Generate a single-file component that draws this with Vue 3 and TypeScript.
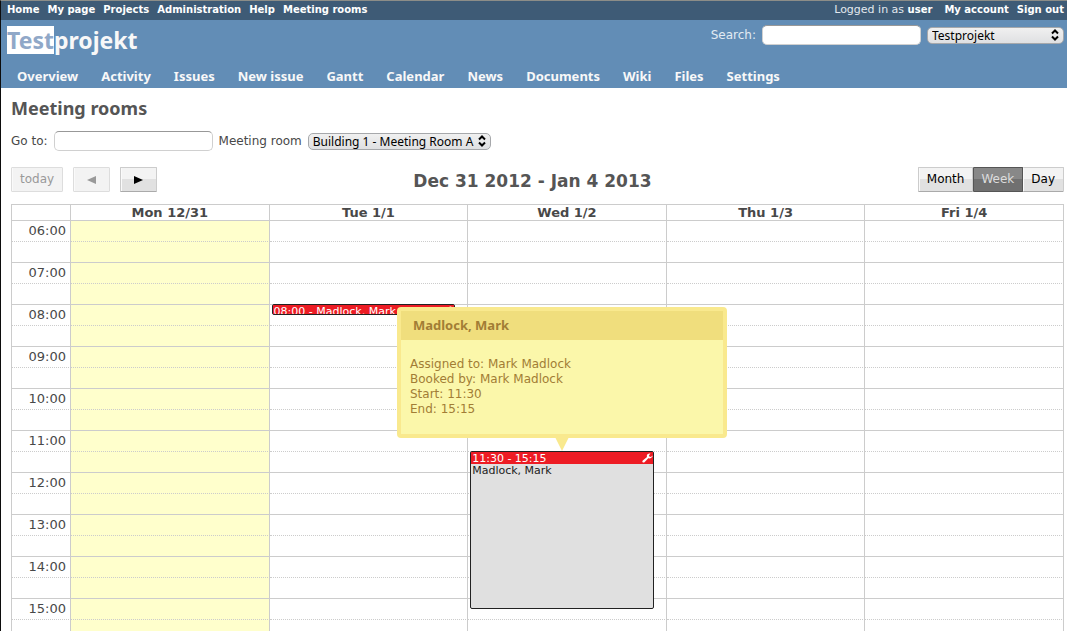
<script setup lang="ts">
import { ref } from 'vue'

interface Booking {
  day: number
  slot: string
  rows: 'short' | 'long'
  heading: string
  title: string
}

interface Slot {
  label: string
  time: string
  half: boolean
}

const accountLinks = ['My account', 'Sign out']
const topLinks = ['Home', 'My page', 'Projects', 'Administration', 'Help', 'Meeting rooms']
const projectTabs = [
  'Overview', 'Activity', 'Issues', 'New issue', 'Gantt', 'Calendar',
  'News', 'Documents', 'Wiki', 'Files', 'Settings',
]
const days = ['Mon 12/31', 'Tue 1/1', 'Wed 1/2', 'Thu 1/3', 'Fri 1/4']
const views = ['Month', 'Week', 'Day']

const query = ref('')
const goTo = ref('')
const project = ref('Testprojekt')
const room = ref('Building 1 - Meeting Room A')
const view = ref('Week')
const today = 0

const slots: Slot[] = []
for (let hour = 6; hour <= 15; hour++) {
  const hh = String(hour).padStart(2, '0')
  slots.push({ label: `${hh}:00`, time: `${hh}:00`, half: false })
  slots.push({ label: '', time: `${hh}:30`, half: true })
}

const bookings: Booking[] = [
  { day: 1, slot: '08:00', rows: 'short', heading: '08:00 - Madlock, Mark', title: '' },
  { day: 2, slot: '11:30', rows: 'long', heading: '11:30 - 15:15', title: 'Madlock, Mark' },
]

const details = [
  'Assigned to: Mark Madlock',
  'Booked by: Mark Madlock',
  'Start: 11:30',
  'End: 15:15',
]

function bookingsAt(day: number, time: string): Booking[] {
  return bookings.filter((b) => b.day === day && b.slot === time)
}
</script>

<template>
  <div class="page">
    <div class="top-menu">
      <nav class="top-links" aria-label="Global">
        <a v-for="link in topLinks" :key="link" href="#">{{ link }}</a>
      </nav>
      <div class="account">
        <span class="logged">Logged in as <a href="#">user</a></span>
        <a v-for="link in accountLinks" :key="link" href="#">{{ link }}</a>
      </div>
    </div>

    <header class="header">
      <div class="header-row">
        <h1><span class="selected">Test</span>projekt</h1>
        <form class="quick-search" @submit.prevent>
          <label for="q">Search:</label>
          <input id="q" v-model="query" type="text" />
          <span class="select project-select">
            <select v-model="project" aria-label="Project">
              <option>Testprojekt</option>
            </select>
            <svg viewBox="0 0 8 12" aria-hidden="true"><path d="M1 4.5 4 1.5 7 4.5M1 7.5l3 3 3-3" /></svg>
          </span>
        </form>
      </div>
      <nav class="tabs" aria-label="Project">
        <a v-for="tab in projectTabs" :key="tab" href="#">{{ tab }}</a>
      </nav>
    </header>

    <main class="content">
      <h2>Meeting rooms</h2>
      <form class="filters" @submit.prevent>
        <label for="goto">Go to:</label>
        <input id="goto" v-model="goTo" type="text" />
        <label for="room">Meeting room</label>
        <span class="select room-select">
          <select id="room" v-model="room">
            <option>Building 1 - Meeting Room A</option>
          </select>
          <svg viewBox="0 0 8 12" aria-hidden="true"><path d="M1 4.5 4 1.5 7 4.5M1 7.5l3 3 3-3" /></svg>
        </span>
      </form>

      <div class="toolbar">
        <div class="pager">
          <button type="button" disabled>today</button>
          <button type="button" class="arrow" disabled aria-label="Previous week">
            <svg viewBox="0 0 9 8" aria-hidden="true"><path d="M9 0v8L0 4z" /></svg>
          </button>
          <button type="button" class="arrow" aria-label="Next week">
            <svg viewBox="0 0 9 8" aria-hidden="true"><path d="M0 0v8l9-4z" /></svg>
          </button>
        </div>
        <h3>Dec 31 2012 - Jan 4 2013</h3>
        <div class="views">
          <button
            v-for="name in views"
            :key="name"
            type="button"
            :class="{ active: name === view }"
            :aria-pressed="name === view"
            @click="view = name"
          >{{ name }}</button>
        </div>
      </div>

      <table class="agenda">
        <thead>
          <tr>
            <th class="axis"></th>
            <th v-for="day in days" :key="day" scope="col">{{ day }}</th>
          </tr>
        </thead>
        <tbody>
          <tr v-for="slot in slots" :key="slot.time" :class="{ half: slot.half }">
            <th class="axis" scope="row">{{ slot.label }}</th>
            <td v-for="(day, index) in days" :key="day" :class="{ today: index === today }">
              <div
                v-for="booking in bookingsAt(index, slot.time)"
                :key="booking.heading"
                class="event"
                :class="booking.rows"
              >
                <div class="event-body">
                  <div class="event-head">
                    <span>{{ booking.heading }}</span>
                    <svg viewBox="0 0 11 10" aria-hidden="true">
                      <path d="M10.6 2.6 8.9 4 7.3 3.6 7 2.200 8.500.6C7 .1 5.300.8 4.900 2.300c-.2.600-.1 1.100.1 1.600L.8 7.400c-.6.500-.6 1.300-.1 1.800.5.500 1.300.5 1.800 0L6.300 5.300c1.700.6 4.400-.5 4.300-2.700z" />
                    </svg>
                  </div>
                  <div v-if="booking.title" class="event-title">{{ booking.title }}</div>
                </div>
                <div v-if="booking.rows === 'long'" class="tip" role="tooltip">
                  <div class="tip-title">Madlock, Mark</div>
                  <div class="tip-text">
                    <div v-for="line in details" :key="line">{{ line }}</div>
                  </div>
                  <svg class="tip-arrow" viewBox="0 0 14 14" aria-hidden="true"><path d="M0 0h14L7 14z" /></svg>
                </div>
              </div>
            </td>
          </tr>
        </tbody>
      </table>
    </main>
  </div>
</template>

<style>
body {
  background: #fff;
}
</style>

<style scoped>
.page {
  box-sizing: border-box;
  height: 100vh;
  overflow: hidden;
  border-top: 1px solid #8c8d88;
  border-left: 1px solid #0c0c0c;
  color: #484848;
  font-family: "DejaVu Sans", Verdana, sans-serif;
  font-size: 12px;
}

a {
  color: inherit;
  text-decoration: none;
}

.top-menu {
  display: flex;
  justify-content: space-between;
  height: 19px;
  padding: 0 3px 0 6px;
  background: #3e5b76;
  color: #fff;
  font-size: 10px;
  font-weight: bold;
  line-height: 17px;
}

.top-links {
  display: flex;
  gap: 8px;
}

.account {
  display: flex;
  gap: 8px;
}

.logged {
  margin-right: 4px;
  color: #e3e9ef;
  font-size: 11px;
  font-weight: normal;
}

.logged a {
  color: #fff;
  font-size: 10px;
  font-weight: bold;
}

.header {
  height: 68px;
  background: #628db6;
  color: #f8f8f8;
}

.header-row {
  display: flex;
  justify-content: space-between;
  align-items: flex-start;
  height: 45px;
  padding: 5px 3px 0 6px;
  box-sizing: border-box;
}

h1,
h2,
h3 {
  margin: 0;
  font-family: "Noto Sans", "Trebuchet MS", sans-serif;
  font-weight: bold;
}

h1 {
  padding-top: 1px;
  font-size: 23px;
  line-height: 28px;
}

.selected {
  display: inline-block;
  background: #fff;
  color: #90a8c8;
}

.quick-search {
  display: flex;
  align-items: center;
  gap: 6px;
  color: #e3ebf3;
}

input {
  box-sizing: border-box;
  width: 159px;
  height: 20px;
  padding: 2px 4px;
  border: 1px solid #d0d0d0;
  border-top-color: #989898;
  border-radius: 5px;
  background: #fff;
  font: inherit;
}

.select {
  position: relative;
  display: block;
}

.select select {
  display: block;
  box-sizing: border-box;
  width: 100%;
  height: 17px;
  margin: 0;
  padding: 0 14px 0 4px;
  appearance: none;
  border: 1px solid #a6a8ab;
  border-radius: 5px;
  background: linear-gradient(#f0f0f0, #dfe0e2);
  color: #000;
  font-family: "Noto Sans", sans-serif;
  font-size: 12px;
  line-height: 15px;
}

.select svg {
  position: absolute;
  top: 2px;
  right: 5px;
  width: 8px;
  height: 12px;
  fill: none;
  stroke: #000;
  stroke-width: 2;
  pointer-events: none;
}

.project-select {
  width: 137px;
}

.tabs {
  display: flex;
  gap: 23px;
  padding-left: 16px;
  font-family: "Noto Sans", "Trebuchet MS", sans-serif;
  font-size: 13px;
  font-weight: bold;
  line-height: 22px;
}

.content {
  padding: 8px 3px 0 10px;
}

h2 {
  color: #555;
  font-size: 18px;
  line-height: 24px;
}

.filters {
  display: flex;
  align-items: center;
  gap: 6px;
  margin-top: 11px;
}

.room-select {
  width: 183px;
}

.toolbar {
  display: flex;
  align-items: center;
  margin: 16px 0 12px;
}

.pager {
  display: flex;
  gap: 10px;
}

h3 {
  flex: 1;
  padding: 4px 10px 0 0;
  color: #555;
  font-family: "DejaVu Sans", sans-serif;
  font-size: 17px;
  line-height: 21px;
  text-align: center;
}

button {
  box-sizing: border-box;
  height: 25px;
  margin: 0;
  padding: 0 8px;
  border: 1px solid #ccc;
  border-bottom-color: #aaa;
  border-radius: 1px;
  background: linear-gradient(#f3f3f3 0 46%, #e1e1e1 46%);
  box-shadow: inset 1px 0 #fafafa;
  color: #000;
  font: inherit;
  line-height: 23px;
}

button:disabled {
  border-color: #ddd;
  background: #f3f3f3;
  color: #999;
}

.arrow {
  width: 37px;
  padding: 0 13px;
}

.arrow svg {
  display: block;
  width: 9px;
  height: 8px;
  fill: currentColor;
}

.views {
  display: flex;
}

.views button + button {
  border-left: 0;
}

.views .active {
  border-color: #555;
  background: linear-gradient(#888 0 46%, #707070 46%);
  box-shadow: inset 1px 0 #555;
  color: #ddd;
}

.agenda {
  width: 100%;
  table-layout: fixed;
  border-collapse: separate;
  border-spacing: 0;
  border-top: 1px solid #ccc;
  border-left: 1px solid #ccc;
}

.agenda th,
.agenda td {
  box-sizing: border-box;
  padding: 0;
  border-right: 1px solid #ccc;
}

.agenda thead th {
  height: 16px;
  border-bottom: 1px solid #ccc;
  font-size: 13px;
  line-height: 15px;
}

.agenda .axis {
  width: 59px;
}

tbody th,
tbody td {
  position: relative;
  height: 21px;
  border-bottom: 1px dotted #ccc;
}

tbody .half th,
tbody .half td {
  border-bottom-style: solid;
}

tbody .axis {
  padding-right: 4px;
  font-size: 13px;
  font-weight: normal;
  line-height: 20px;
  text-align: right;
}

.today {
  background: #ffc;
}

.event {
  position: absolute;
  top: -1px;
  right: 12px;
  left: 2px;
  z-index: 1;
  box-sizing: border-box;
  height: 11px;
  border: 1px solid #222;
  border-radius: 2px;
  background: #e0e0e0;
  color: #222;
  font-size: 11px;
  line-height: 12px;
}

.event.long {
  z-index: 2;
  height: 158px;
}

.event-body {
  height: 100%;
  overflow: hidden;
}

.event-head {
  display: flex;
  justify-content: space-between;
  height: 12px;
  padding-left: 1px;
  background: #ed1c24;
  color: #fff;
  line-height: 14px;
  white-space: nowrap;
}

.event-head svg {
  width: 11px;
  height: 10px;
  margin-top: 1px;
  fill: #fff;
}

.event-title {
  padding-left: 1px;
  line-height: 14px;
}

.tip {
  position: absolute;
  bottom: calc(100% + 14px);
  left: 50%;
  box-sizing: border-box;
  width: 330px;
  margin-left: -165px;
  border: 4px solid #f9e98e;
  border-radius: 4px;
  background: #fbf7aa;
  color: #a27d35;
  font-size: 12px;
  line-height: 15px;
}

.tip-title {
  padding: 7px 12px;
  background: #f0de7d;
  font-family: "Noto Sans", sans-serif;
  font-size: 13px;
  font-weight: bold;
}

.tip-text {
  padding: 17px 9px;
}

.tip-arrow {
  position: absolute;
  top: calc(100% + 3px);
  left: calc(50% - 7px);
  width: 14px;
  height: 14px;
  fill: #f9e98e;
}
</style>
